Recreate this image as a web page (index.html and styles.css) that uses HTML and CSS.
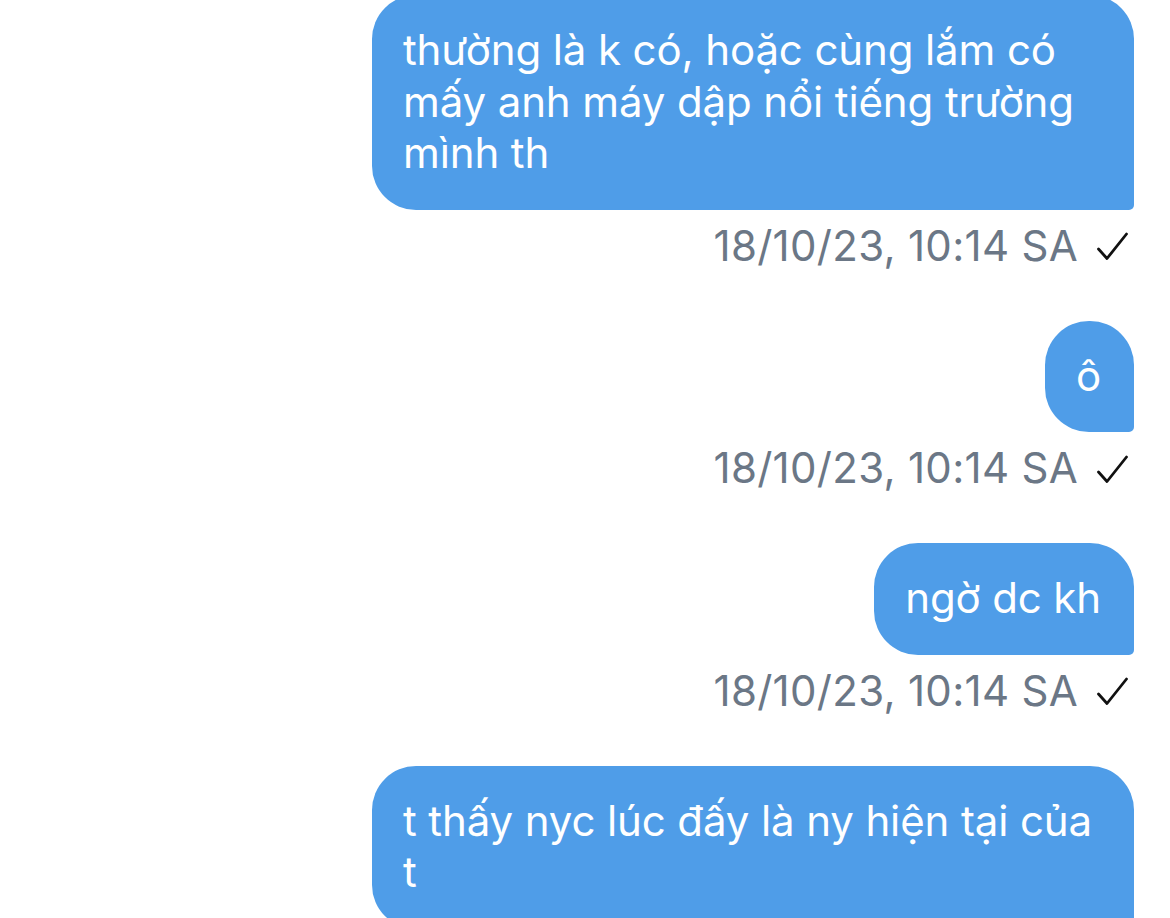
FILE: index.html
```html
<!DOCTYPE html>
<html lang="vi">
<head>
<meta charset="utf-8">
<link rel="stylesheet" href="styles.css">
</head>
<body>
<main class="chat">
  <div class="msg">
    <div class="bubble">thường là k có, hoặc cùng lắm có mấy anh máy dập nổi tiếng trường mình th</div>
    <div class="meta"><span class="time">18/10/23, 10:14 SA</span><svg class="check" viewBox="0 0 31 29"><polyline points="1.5,17 10,26.5 29.5,2"/></svg></div>
  </div>
  <div class="msg">
    <div class="bubble">ô</div>
    <div class="meta"><span class="time">18/10/23, 10:14 SA</span><svg class="check" viewBox="0 0 31 29"><polyline points="1.5,17 10,26.5 29.5,2"/></svg></div>
  </div>
  <div class="msg">
    <div class="bubble">ngờ dc kh</div>
    <div class="meta"><span class="time">18/10/23, 10:14 SA</span><svg class="check" viewBox="0 0 31 29"><polyline points="1.5,17 10,26.5 29.5,2"/></svg></div>
  </div>
  <div class="msg">
    <div class="bubble">t thấy nyc lúc đấy là ny hiện tại của t</div>
  </div>
</main>
</body>
</html>
```

FILE: styles.css
```css
html, body {
  margin: 0;
  padding: 0;
  background: #ffffff;
  overflow: hidden;
}

.chat {
  display: flex;
  flex-direction: column;
  align-items: flex-end;
  padding: 0 36px 0 0;
  margin-top: -5px;
  font-family: "Inter", "Noto Sans", sans-serif;
}

.msg {
  display: flex;
  flex-direction: column;
  align-items: flex-end;
  margin-bottom: 53px;
}

.bubble {
  box-sizing: border-box;
  max-width: 762px;
  background: #4f9de8;
  color: #ffffff;
  font-size: 42px;
  line-height: 51.5px;
  letter-spacing: -0.12px;
  padding: 29px 33px 31px 31px;
  border-radius: 44px 44px 5px 44px;
}

.meta {
  display: flex;
  align-items: center;
  gap: 19px;
  margin-top: 14px;
  padding-right: 6px;
  height: 44px;
}

.time {
  color: #6b7786;
  font-size: 42px;
  line-height: 44px;
  letter-spacing: 0.3px;
}

.check {
  width: 31px;
  height: 29px;
  margin-top: 2px;
}

.check polyline {
  fill: none;
  stroke: #111111;
  stroke-width: 2.8;
  stroke-linecap: round;
  stroke-linejoin: round;
}
```
